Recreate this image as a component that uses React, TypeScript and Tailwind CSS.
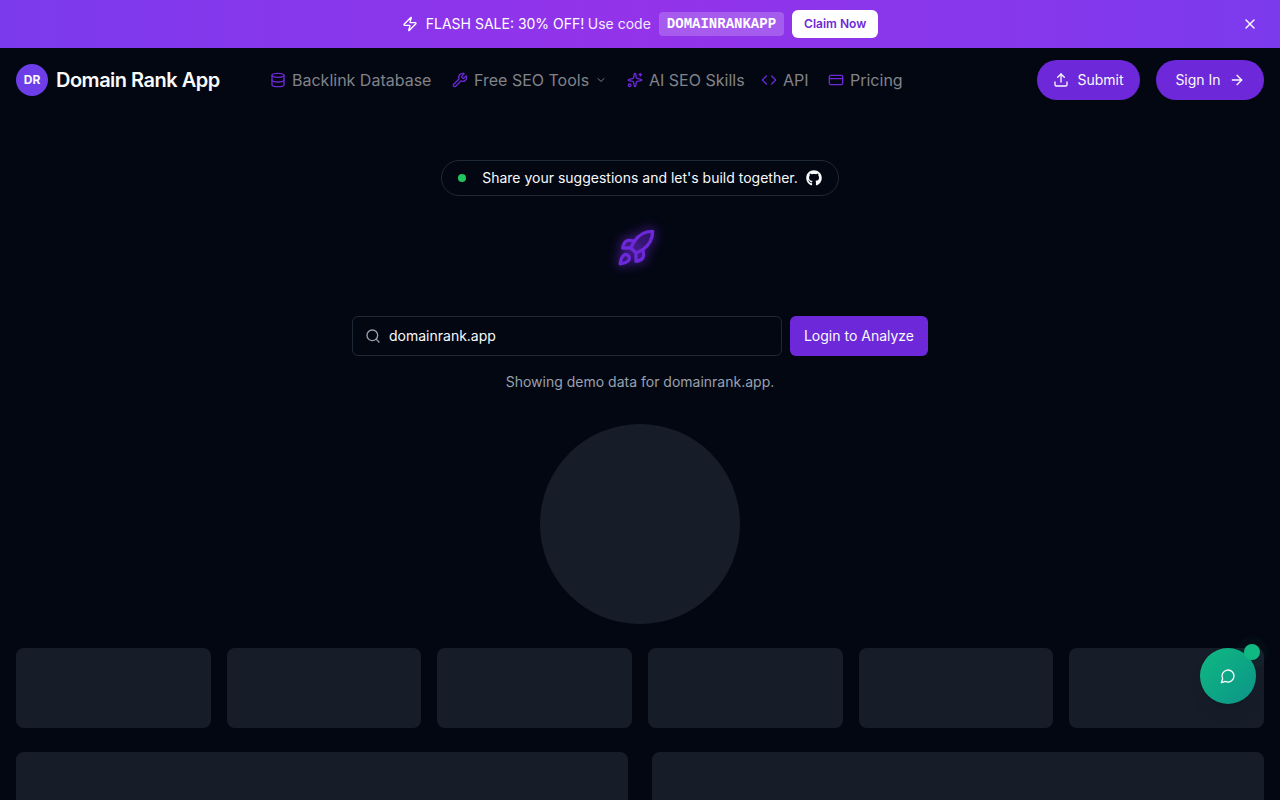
import {
  ArrowRight,
  ChevronDown,
  Code,
  CreditCard,
  Database,
  Rocket,
  Search,
  Sparkles,
  Upload,
  Wrench,
  X,
  Zap,
} from "lucide-react";
import { FaGithub } from "react-icons/fa";

const navItems = [
  { label: "Backlink Database", icon: Database, width: "w-[140px]" },
  { label: "Free SEO Tools", icon: Wrench, width: "w-[111px]", hasMenu: true },
  { label: "AI SEO Skills", icon: Sparkles, width: "w-[92px]" },
  { label: "API", icon: Code, width: "w-[25px]" },
  { label: "Pricing", icon: CreditCard, width: "w-[52px]" },
];

function PromoBanner() {
  return (
    <div className="flex h-12 items-center bg-[linear-gradient(to_right,#7c3aed,#9333ea,#7c3aed)] px-4 text-sm text-white">
      <div className="w-7" />
      <div className="flex flex-1 items-center justify-center gap-2">
        <Zap size={16} />
        <span className="w-[154px] whitespace-nowrap">FLASH SALE: 30% OFF!</span>
        <span className="text-white/90">Use code</span>
        <code className="rounded-sm bg-white/20 px-2 py-0.5 font-['Liberation_Mono',monospace] font-bold">
          DOMAINRANKAPP
        </code>
        <button className="h-7 rounded-md bg-white px-3 text-xs font-semibold text-[#6d28d9]">
          Claim Now
        </button>
      </div>
      <button aria-label="Close banner" className="flex size-7 items-center justify-center">
        <X size={16} />
      </button>
    </div>
  );
}

function Header() {
  return (
    <header className="flex h-16 items-center px-4">
      <a href="#" className="mr-12 flex items-center gap-2">
        <span className="flex size-8 items-center justify-center rounded-full bg-[#6d3de8] text-xs font-bold">
          DR
        </span>
        <span className="w-[166px] whitespace-nowrap text-xl font-semibold tracking-tight">
          Domain Rank App
        </span>
      </a>
      <nav className="flex flex-1 items-center gap-5">
        {navItems.map(({ label, icon: Icon, width, hasMenu }) => (
          <a
            key={label}
            href="#"
            className="flex items-center gap-1.5 whitespace-nowrap text-base text-[#818389]"
          >
            <Icon size={16} className="text-[#6d28d9]" />
            <span className={width}>{label}</span>
            {hasMenu && <ChevronDown size={12} className="ml-1" />}
          </a>
        ))}
      </nav>
      <div className="flex items-center gap-4 text-sm">
        <button className="flex h-10 w-[103px] items-center justify-center gap-2 rounded-full bg-[#6d28d9]">
          <Upload size={16} />
          Submit
        </button>
        <button className="flex h-10 w-[108px] items-center justify-center gap-2 rounded-full bg-[#6d28d9]">
          Sign In
          <ArrowRight size={16} />
        </button>
      </div>
    </header>
  );
}

function Hero() {
  return (
    <section className="flex flex-col items-center pt-12">
      <a
        href="#"
        className="flex h-9 items-center rounded-full border border-[#1f2937] px-4 text-sm"
      >
        <span className="mr-4 size-2 rounded-full bg-[#22c55e]" />
        Share your suggestions and let's build together.
        <FaGithub size={16} className="ml-2" />
      </a>
      <Rocket
        size={40}
        className="mt-8 mr-2 fill-[#6d28d9]/15 text-[#6d28d9] drop-shadow-[0_0_6px_#6d28d9]"
      />
      <form className="mt-12 flex w-full max-w-xl gap-2">
        <label className="flex h-10 flex-1 items-center gap-2 rounded-md border border-[#1f2937] px-3 text-sm">
          <Search size={16} className="text-gray-400" />
          <input
            aria-label="Domain"
            defaultValue="domainrank.app"
            className="min-w-0 flex-1 bg-transparent outline-none"
          />
        </label>
        <button type="button" className="h-10 w-[138px] rounded-md bg-[#6d28d9] text-sm">
          Login to Analyze
        </button>
      </form>
      <p className="mt-4 text-sm text-gray-400">Showing demo data for domainrank.app.</p>
    </section>
  );
}

function Skeletons() {
  return (
    <section className="px-4 pt-8">
      <div className="mx-auto size-50 rounded-full bg-[#161d29]" />
      <div className="mt-6 grid grid-cols-6 gap-4">
        {[1, 2, 3, 4, 5, 6].map((n) => (
          <div key={n} className="h-20 rounded-lg bg-[#161d29]" />
        ))}
      </div>
      <div className="mt-6 grid grid-cols-2 gap-6">
        <div className="h-80 rounded-lg bg-[#161d29]" />
        <div className="h-80 rounded-lg bg-[#161d29]" />
      </div>
    </section>
  );
}

function ChatButton() {
  return (
    <button
      aria-label="Open chat"
      className="fixed right-6 bottom-24 flex size-14 items-center justify-center rounded-full bg-linear-to-br from-[#10b981] to-[#0d9488] shadow-lg"
    >
      <svg
        width="16"
        height="16"
        viewBox="0 0 24 24"
        fill="none"
        stroke="currentColor"
        strokeWidth="2"
        strokeLinecap="round"
        strokeLinejoin="round"
      >
        <path d="M7.9 20A9 9 0 1 0 4 16.1L2 22Z" />
      </svg>
      <span className="absolute -top-1 -right-1 size-4 rounded-full bg-[#10b981] ring-8 ring-[#10b981]/3" />
    </button>
  );
}

export default function App() {
  return (
    <div className="h-screen overflow-hidden bg-[#030712] font-['Inter',sans-serif] text-gray-50">
      <PromoBanner />
      <Header />
      <main>
        <Hero />
        <Skeletons />
      </main>
      <ChatButton />
    </div>
  );
}
